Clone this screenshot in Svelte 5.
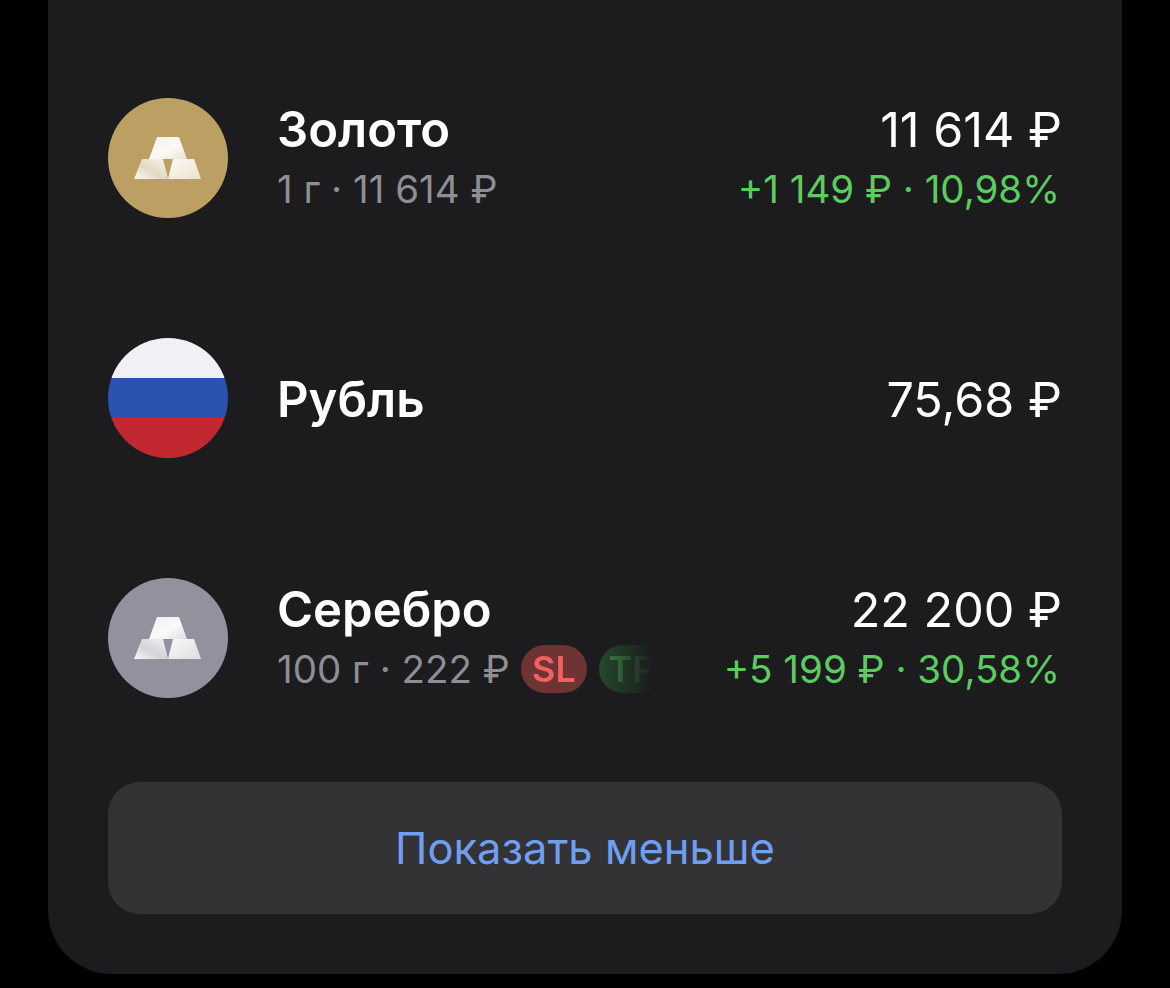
<script>
  const assets = [
    {
      name: "Золото",
      icon: "gold",
      sub: "1 г · 11 614 ₽",
      value: "11 614 ₽",
      gain: "+1 149 ₽ · 10,98%",
    },
    { name: "Рубль", icon: "flag", value: "75,68 ₽" },
    {
      name: "Серебро",
      icon: "silver",
      sub: "100 г · 222 ₽",
      tags: true,
      value: "22 200 ₽",
      gain: "+5 199 ₽ · 30,58%",
    },
  ];
</script>

<svg class="defs" width="0" height="0" aria-hidden="true">
  <defs>
    <linearGradient id="bar-top" x1="0" y1="0" x2="1" y2="1">
      <stop offset="0" stop-color="#fff" stop-opacity="0.85" />
      <stop offset="0.55" stop-color="#fff" stop-opacity="0.95" />
      <stop offset="1" stop-color="#fff" stop-opacity="0.7" />
    </linearGradient>
    <linearGradient id="bar-left" x1="0" y1="1" x2="1" y2="0">
      <stop offset="0" stop-color="#fff" stop-opacity="0.95" />
      <stop offset="0.45" stop-color="#fff" stop-opacity="0.6" />
      <stop offset="1" stop-color="#fff" stop-opacity="0.9" />
    </linearGradient>
    <linearGradient id="bar-right" x1="0" y1="0" x2="1" y2="1">
      <stop offset="0" stop-color="#fff" stop-opacity="0.95" />
      <stop offset="1" stop-color="#fff" stop-opacity="0.7" />
    </linearGradient>
  </defs>
</svg>

<main class="card">
  <div class="rows">
    {#each assets as a}
      <div class="row">
        <div class="icon {a.icon}">
          {#if a.icon !== "flag"}
            <svg viewBox="0 0 120 120" width="120" height="120">
              <polygon points="49,39 71,39 79,61 41,61" fill="url(#bar-top)" />
              <polygon points="34,61 55,61 60,81 26,81" fill="url(#bar-left)" />
              <polygon points="65,61 86,61 93,81 60,81" fill="url(#bar-right)" />
            </svg>
          {/if}
        </div>
        <div class="info">
          <div class="name">{a.name}</div>
          {#if a.sub}
            <div class="sub">
              <span>{a.sub}</span>
              {#if a.tags}
                <div class="tags">
                  <span class="tag sl">SL</span>
                  <span class="tag tp">TP</span>
                </div>
              {/if}
            </div>
          {/if}
        </div>
        <div class="nums">
          <div class="value">{a.value}</div>
          {#if a.gain}
            <div class="gain">{a.gain}</div>
          {/if}
        </div>
      </div>
    {/each}
  </div>
  <button class="more">Показать меньше</button>
</main>

<style>
  :global(body) {
    background: #000;
    font-family: Inter, "Liberation Sans", sans-serif;
  }

  .defs {
    position: absolute;
  }

  .card {
    box-sizing: border-box;
    width: 1074px;
    height: 974px;
    margin-left: 48px;
    padding: 98px 60px 60px;
    background: #1c1c1e;
    border-radius: 0 0 64px 64px;
  }

  .rows {
    display: flex;
    flex-direction: column;
    gap: 120px;
  }

  .row {
    display: flex;
    align-items: center;
    height: 120px;
  }

  .icon {
    flex: 0 0 120px;
    height: 120px;
    border-radius: 50%;
    overflow: hidden;
    margin-right: 49px;
  }

  .icon svg {
    display: block;
  }

  .gold {
    background: #bc9f63;
  }

  .silver {
    background: #92929e;
  }

  .flag {
    background: linear-gradient(#f1f1f5 0 40px, #2a52ae 40px 80px, #c2282f 80px);
  }

  .info {
    flex: 1;
    min-width: 0;
    padding-top: 4px;
  }

  .name {
    font-size: 49px;
    line-height: 60px;
    font-weight: 600;
    color: #fff;
  }

  .sub {
    display: flex;
    align-items: center;
    height: 58px;
    padding-bottom: 2px;
    font-size: 38.5px;
    color: #8e8e93;
  }

  .tags {
    display: flex;
    gap: 12px;
    width: 132px;
    margin-left: 11px;
    overflow: hidden;
    -webkit-mask-image: linear-gradient(to right, #000 70px, transparent 132px);
    mask-image: linear-gradient(to right, #000 70px, transparent 132px);
  }

  .tag {
    flex: 0 0 66px;
    height: 48px;
    border-radius: 24px;
    font-size: 36px;
    font-weight: 600;
    line-height: 48px;
    text-align: center;
  }

  .sl {
    background: #6e3333;
    color: #f2605f;
  }

  .tp {
    background: #25502c;
    color: #439a4c;
  }

  .nums {
    text-align: right;
    white-space: nowrap;
    padding-top: 4px;
  }

  .value {
    font-size: 48.5px;
    line-height: 60px;
    color: #fff;
  }

  .gain {
    font-size: 38.5px;
    line-height: 58px;
    padding: 0 2px 2px 0;
    color: #5ecb60;
  }

  .more {
    display: block;
    width: 100%;
    height: 132px;
    margin-top: 84px;
    border: 0;
    border-radius: 32px;
    background: #333335;
    color: #6f9ef2;
    font-family: inherit;
    font-size: 43.5px;
  }
</style>
